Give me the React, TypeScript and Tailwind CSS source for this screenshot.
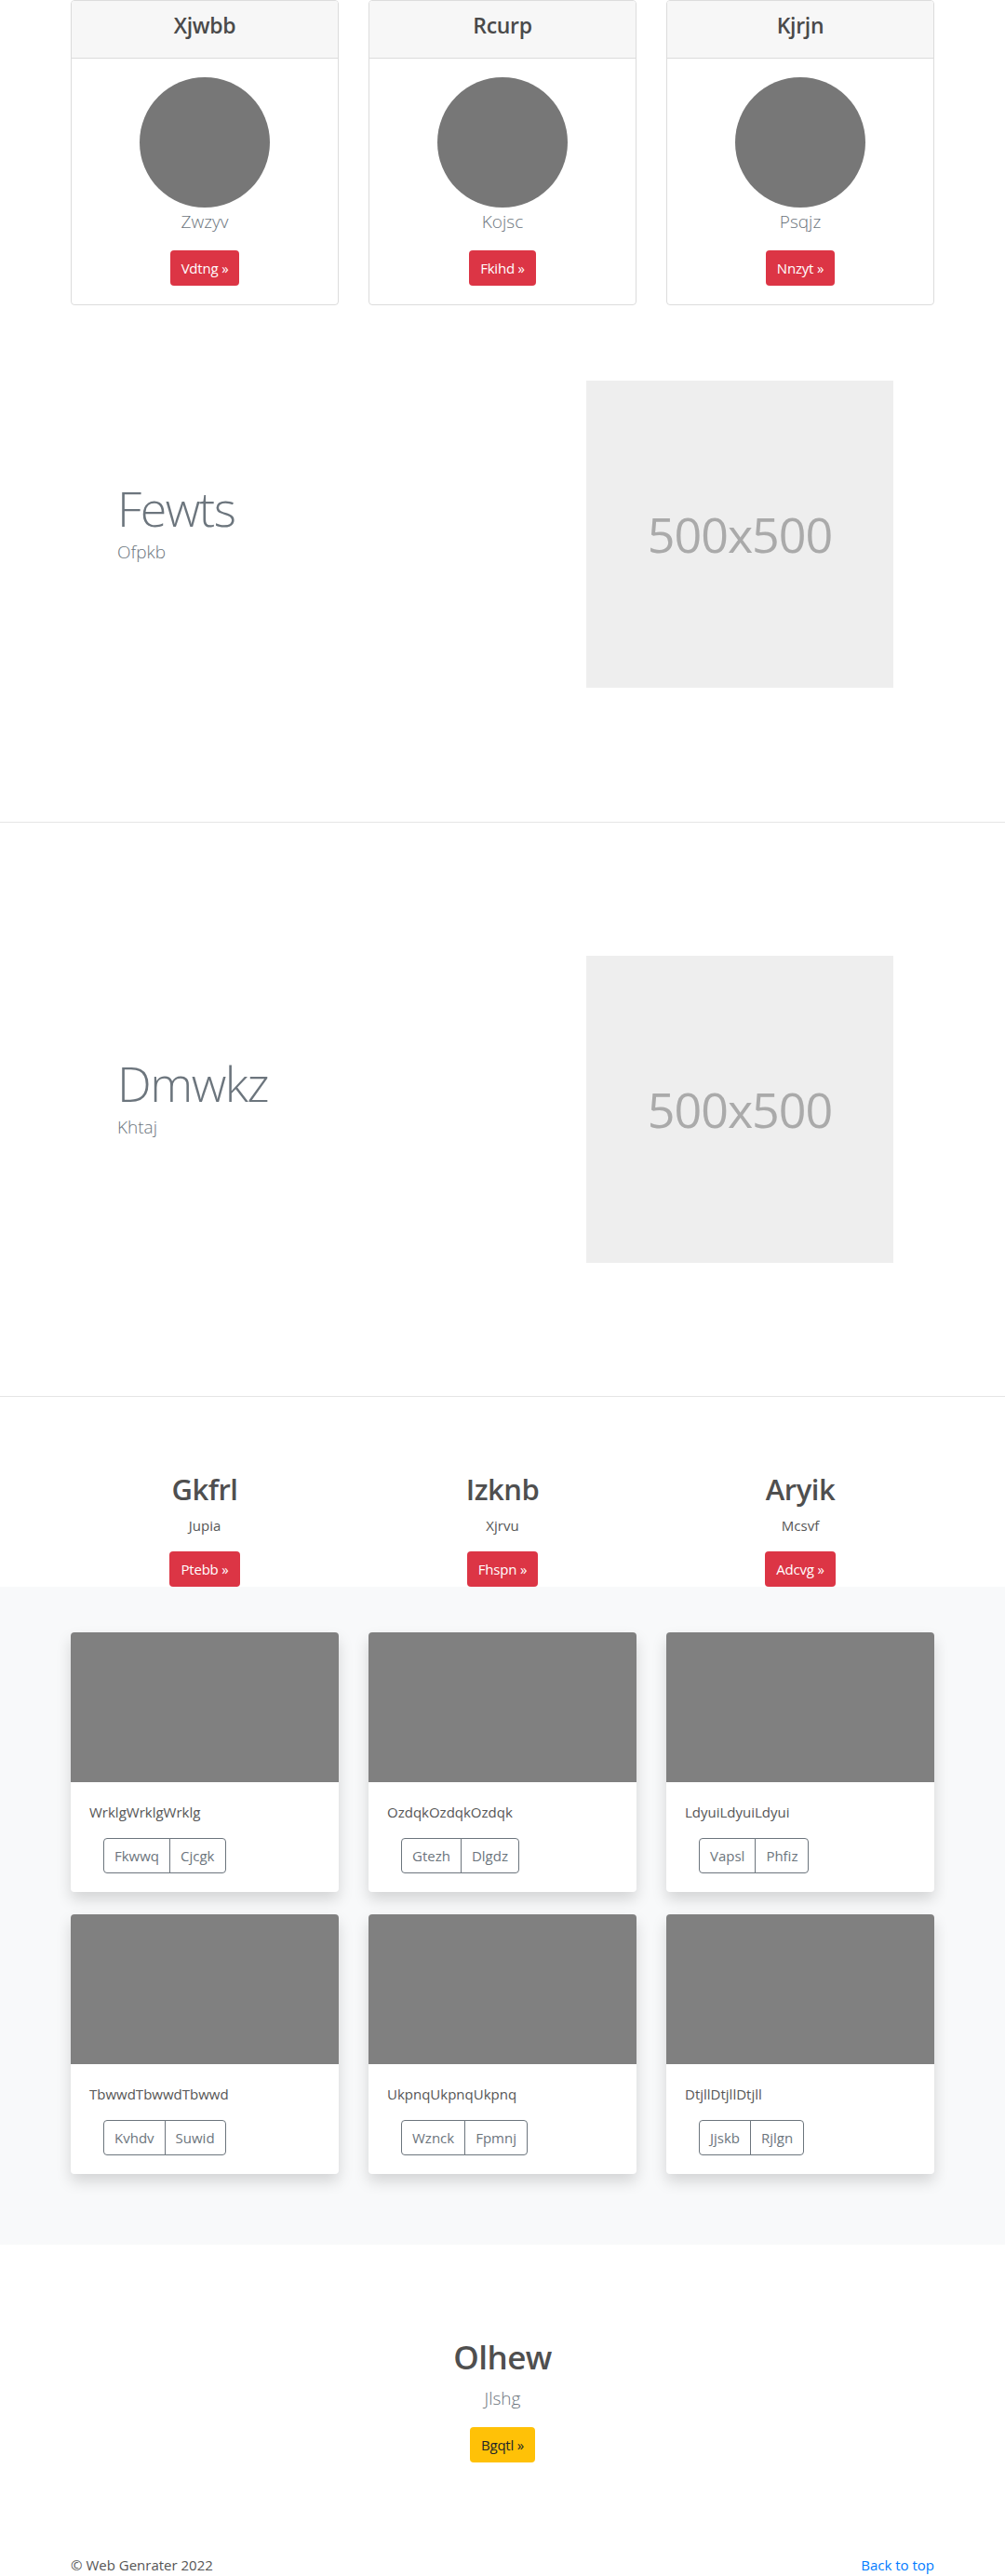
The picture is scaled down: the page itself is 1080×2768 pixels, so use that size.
import React from 'react';

const topCards = [
  { title: 'Xjwbb', name: 'Zwzyv', action: 'Vdtng' },
  { title: 'Rcurp', name: 'Kojsc', action: 'Fkihd' },
  { title: 'Kjrjn', name: 'Psqjz', action: 'Nnzyt' },
];

const heroes = [
  { title: 'Fewts', sub: 'Ofpkb' },
  { title: 'Dmwkz', sub: 'Khtaj' },
];

const features = [
  { title: 'Gkfrl', text: 'Jupia', action: 'Ptebb' },
  { title: 'Izknb', text: 'Xjrvu', action: 'Fhspn' },
  { title: 'Aryik', text: 'Mcsvf', action: 'Adcvg' },
];

const albums = [
  { text: 'WrklgWrklgWrklg', a: 'Fkwwq', b: 'Cjcgk' },
  { text: 'OzdqkOzdqkOzdqk', a: 'Gtezh', b: 'Dlgdz' },
  { text: 'LdyuiLdyuiLdyui', a: 'Vapsl', b: 'Phfiz' },
  { text: 'TbwwdTbwwdTbwwd', a: 'Kvhdv', b: 'Suwid' },
  { text: 'UkpnqUkpnqUkpnq', a: 'Wznck', b: 'Fpmnj' },
  { text: 'DtjllDtjllDtjll', a: 'Jjskb', b: 'Rjlgn' },
];

function RedButton({ label }: { label: string }) {
  return (
    <span className="inline-block rounded-[4px] bg-[#dc3545] px-3 py-[7px] text-[15px] leading-6 tracking-[-0.2px] text-white">
      {label} »
    </span>
  );
}

function Hero({ title, sub, first }: { title: string; sub: string; first?: boolean }) {
  return (
    <section
      className={
        first
          ? 'border-b border-[#e5e5e5] pt-[81px] pb-[144px]'
          : 'border-b border-[#e5e5e5] pt-[143px] pb-[143px]'
      }
    >
      <div className="mx-auto flex w-[960px] items-center">
        <div className="flex-1 pl-[66px] pb-[26px]">
          <h1 className="text-[52px] font-light leading-[64px] tracking-[-1.5px] text-[#6c757d]">{title}</h1>
          <p className="text-[19px] font-light leading-[30px] text-[#6c757d]">{sub}</p>
        </div>
        <div className="mr-[60px] flex h-[330px] w-[330px] items-center justify-center bg-[#eeeeee]">
          <span className="text-[52px] tracking-[-1px] text-[#aaaaaa]">500x500</span>
        </div>
      </div>
    </section>
  );
}

export default function App() {
  return (
    <div className="min-h-[2768px] bg-white font-['Open_Sans',sans-serif] text-[#212529]">
      {/* Top profile cards */}
      <div className="mx-auto grid w-[960px] grid-cols-3">
        {topCards.map((c) => (
          <div key={c.title} className="px-4">
            <div className="overflow-hidden rounded-[4px] border border-[#dcdcdc] text-center">
              <div className="border-b border-[#dcdcdc] bg-[#f7f7f7] px-5 pt-3 pb-3">
                <h4 className="mb-2 text-[23px] font-semibold leading-[29px] tracking-[-0.3px] text-[#4a4a4a]">
                  {c.title}
                </h4>
              </div>
              <div className="flex flex-col items-center p-5">
                <div className="h-[140px] w-[140px] rounded-full bg-[#777777]" />
                <p className="mb-4 text-[19px] font-light leading-[30px] text-[#6c757d]">{c.name}</p>
                <RedButton label={c.action} />
              </div>
            </div>
          </div>
        ))}
      </div>

      {/* Heroes */}
      {heroes.map((h, i) => (
        <Hero key={h.title} title={h.title} sub={h.sub} first={i === 0} />
      ))}

      {/* Features */}
      <div className="mx-auto grid w-[960px] grid-cols-3 pt-[80px] text-center">
        {features.map((f) => (
          <div key={f.title} className="px-4">
            <h2 className="mb-2 text-[31px] font-semibold leading-[38px] tracking-[-0.5px] text-[#4f4f4f]">
              {f.title}
            </h2>
            <p className="mb-4 text-[15px] leading-6 text-[#555555]">{f.text}</p>
            <RedButton label={f.action} />
          </div>
        ))}
      </div>

      {/* Album */}
      <section className="bg-[#f8f9fa] pt-[49px] pb-[76px]">
        <div className="mx-auto grid w-[960px] grid-cols-3 gap-y-6">
          {albums.map((a) => (
            <div key={a.text} className="px-4">
              <div className="overflow-hidden rounded-[4px] bg-white shadow-[0_8px_16px_rgba(0,0,0,0.15)]">
                <div className="h-[161px] bg-[#808080]" />
                <div className="p-5">
                  <p className="mb-4 text-[15px] leading-6 text-[#555555]">{a.text}</p>
                  <div className="ml-[15px] inline-flex">
                    <span className="rounded-l-[4px] border border-[#6c757d] px-[11px] py-[6px] text-[15px] leading-6 text-[#6c757d]">
                      {a.a}
                    </span>
                    <span className="-ml-px rounded-r-[4px] border border-[#6c757d] px-[11px] py-[6px] text-[15px] leading-6 text-[#6c757d]">
                      {a.b}
                    </span>
                  </div>
                </div>
              </div>
            </div>
          ))}
        </div>
      </section>

      {/* Call to action */}
      <section className="pt-[100px] pb-[98px] text-center">
        <h2 className="mb-2 text-[35px] font-semibold leading-[42px] tracking-[-0.5px] text-[#4f4f4f]">Olhew</h2>
        <p className="mb-4 text-[19px] font-light leading-[30px] text-[#6c757d]">Jlshg</p>
        <span className="inline-block rounded-[4px] bg-[#ffc107] px-3 py-[7px] text-[15px] leading-6 tracking-[-0.2px] text-[#212529]">
          Bgqtl »
        </span>
      </section>

      {/* Footer */}
      <footer className="mx-auto flex w-[928px] justify-between text-[15px] leading-6">
        <p className="text-[#555555]">© Web Genrater 2022</p>
        <a href="#" className="text-[#007bff]">
          Back to top
        </a>
      </footer>
    </div>
  );
}
